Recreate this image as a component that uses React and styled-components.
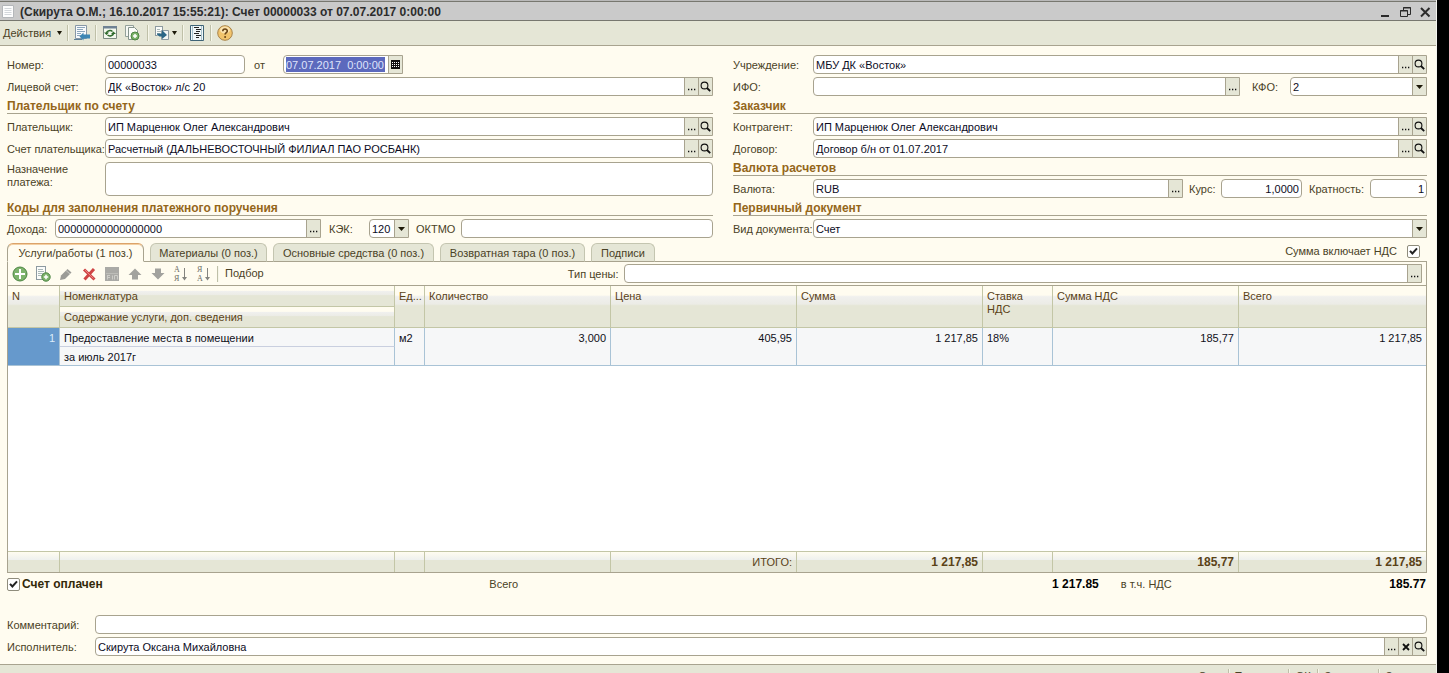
import React, { useId } from "react";
import styled, { createGlobalStyle, css } from "styled-components";

const c = {
  cream: "#fffcf0",
  bar: "#e5e6d6",
  line: "#a8a38f",
  text: "#4a4226",
  head: "#5a4216",
  gold: "#94661a",
  ink: "#0c0c1e",
  soft: "#c3c6a6",
};

const Global = createGlobalStyle`
  *, *::before, *::after { box-sizing: border-box; }
  html, body { margin: 0; height: 100%; background: #000; }
  body, button, input, select, textarea {
    font-family: "Liberation Sans", Arial, sans-serif;
    font-size: 11px;
    line-height: 13px;
  }
  button, input, select, textarea { margin: 0; }
`;

const Desktop = styled.div`
  height: 100vh;
  padding-right: 12px;
  overflow: hidden;
  background: #000;
  color: ${c.text};
`;

const Window = styled.main`
  display: flex;
  flex-direction: column;
  min-height: 100%;
  background: ${c.cream};
  border-right: 1px solid #f4f4f0;
`;

const TitleBar = styled.header`
  display: flex;
  align-items: center;
  gap: 5px;
  height: 21px;
  flex: none;
  padding: 2px 3px 0 1px;
  background: #cacaca;
  border-top: 1px solid #b9b9b9;
  border-bottom: 1px solid #77776f;
  box-shadow: inset 0 1px 0 #77776f;
`;

const Title = styled.h1`
  flex: 1;
  margin: 0;
  font-size: 12px;
  line-height: 16px;
  font-weight: bold;
  color: #2c2c2c;
  white-space: nowrap;
`;

const IconButton = styled.button`
  display: flex;
  align-items: center;
  justify-content: center;
  gap: ${(p) => (p.$w ? 2 : 0)}px;
  flex: none;
  width: ${(p) => p.$w || 16}px;
  height: 16px;
  padding: 0;
  border: 0;
  background: none;
  color: inherit;
`;

const WindowButtons = styled.div`
  display: flex;
  gap: 4px;
  color: #2b2b2b;
`;

const Toolbar = styled.nav`
  display: flex;
  align-items: center;
  height: 25px;
  flex: none;
  padding-left: 3px;
  background: ${c.bar};
  border-bottom: 1px solid ${c.line};
`;

const TextButton = styled.button`
  display: flex;
  align-items: center;
  gap: 6px;
  padding: 0;
  border: 0;
  background: none;
  color: ${c.text};
  white-space: nowrap;
`;

const Separator = styled.span`
  flex: none;
  width: 2px;
  height: 16px;
  margin: 0 ${(p) => p.$r || 5}px 0 ${(p) => p.$l || 5}px;
  border-left: 1px solid #bfc0a8;
  border-right: 1px solid #f6f6ea;
`;

const Content = styled.div`
  padding: 9px 9px 8px 7px;
`;

const FormGrid = styled.div`
  display: grid;
  grid-template-columns: minmax(0, 706fr) minmax(0, 694fr);
  column-gap: 20px;
`;

const Stack = styled.div`
  display: flex;
  flex-direction: column;
  gap: 3px;
`;

const Row = styled.div`
  display: flex;
  align-items: center;
  height: 19px;
`;

const NoteRow = styled.div`
  display: flex;
  height: 34px;
  margin: 1px 0 2px;
`;

const Heading = styled.h2`
  height: 15px;
  margin: 0;
  font-size: 12px;
  line-height: 14px;
  font-weight: bold;
  color: ${c.gold};
  border-bottom: 1px solid ${c.line};
`;

const Label = styled.label`
  flex: none;
  width: ${(p) => p.$w}px;
  margin-left: ${(p) => p.$ml || 0}px;
  white-space: ${(p) => (p.$wrap ? "normal" : "nowrap")};
  padding-top: 1px;
`;

const Box = styled.div`
  display: flex;
  align-items: stretch;
  flex: ${(p) => (p.$w ? "none" : "1")};
  width: ${(p) => (p.$w ? `${p.$w}px` : "auto")};
  min-width: 0;
  height: 19px;
  background: #fff;
  border: 1px solid ${c.line};
  border-radius: ${(p) => (p.$square ? "4px 0 0 4px" : "4px")};
  overflow: hidden;
`;

const fieldText = css`
  flex: 1;
  min-width: 0;
  width: 0;
  padding: 1px 2px 0;
  border: 0;
  outline: 0;
  background: none;
  color: ${c.ink};
`;

const Input = styled.input`
  ${fieldText}
  text-align: ${(p) => (p.$right ? "right" : "left")};
  ${(p) =>
    p.$selected &&
    css`
      margin: 1px 3px 1px 2px;
      padding: 1px 0 0;
      background: #5c69bd;
      color: #dfe3fb;
    `}
`;

const Select = styled.select`
  ${fieldText}
  appearance: none;
`;

const Area = styled.textarea`
  flex: 1;
  min-width: 0;
  height: 34px;
  padding: 2px;
  resize: none;
  color: ${c.ink};
  background: #fff;
  border: 1px solid ${c.line};
  border-radius: 4px;
`;

const boxEnd = css`
  display: flex;
  align-items: center;
  justify-content: center;
  flex: none;
  width: 14px;
  padding: 0;
  border: 0;
  border-left: 1px solid ${c.line};
  background: ${c.bar};
  color: #111;
`;
const BoxButton = styled.button`${boxEnd}`;
const BoxArrow = styled.span`${boxEnd}`;

const TabsRow = styled.div`
  display: flex;
  align-items: flex-end;
  justify-content: space-between;
  padding: 4px 7px 0 0;
`;

const Tabs = styled.div`
  display: flex;
  gap: 6px;
  margin-bottom: -1px;
`;

const Tab = styled.button`
  position: relative;
  width: ${(p) => p.$w}px;
  height: 19px;
  padding: 1px 0 0;
  border: 1px solid ${(p) => (p.$active ? c.line : "#c4c5b0")};
  border-bottom-color: ${(p) => (p.$active ? c.cream : c.line)};
  border-top-color: ${(p) => (p.$active ? "#dba36a" : "#c4c5b0")};
  box-shadow: ${(p) => (p.$active ? "inset 0 1px 0 #f3cfa2" : "none")};
  border-radius: 6px 6px 0 0;
  background: ${(p) => (p.$active ? c.cream : c.bar)};
  color: ${c.text};
  white-space: nowrap;
`;

const CheckLabel = styled.label`
  display: flex;
  align-items: center;
  gap: ${(p) => p.$gap}px;
  height: ${(p) => p.$h || 15}px;
  font-size: ${(p) => (p.$bold ? 12 : 11)}px;
  font-weight: ${(p) => (p.$bold ? "bold" : "normal")};
  color: ${(p) => (p.$bold ? "#33290a" : c.text)};
`;

const Check = styled.input`
  appearance: none;
  width: 13px;
  height: 13px;
  border: 1px solid #8f8c7c;
  border-radius: 2px;
  background: #fff;
`;

const CheckWrap = styled.span`
  display: grid;
  flex: none;
  > * {
    grid-area: 1 / 1;
  }
  > svg {
    margin: 2px;
    z-index: 1;
    pointer-events: none;
    visibility: hidden;
  }
  > input:checked + svg {
    visibility: visible;
  }
`;

const Panel = styled.section`
  border: 1px solid ${c.line};
`;

const PanelBar = styled.div`
  display: flex;
  align-items: center;
  height: 23px;
  padding: 0 4px;
`;

const ToolIcons = styled.div`
  display: flex;
  gap: 7px;
`;

const Table = styled.table`
  width: 100%;
  table-layout: fixed;
  border-collapse: separate;
  border-spacing: 0;
  border-top: 1px solid ${c.line};
  background: #fff;
`;

const Th = styled.th`
  height: 21px;
  padding: 4px 0 0 4px;
  text-align: left;
  vertical-align: top;
  font-weight: normal;
  color: ${c.head};
  border-right: 1px solid ${c.soft};
  border-bottom: 1px solid ${c.soft};
  background: linear-gradient(${c.cream} 22%, #f0f0ee 26%, #ececE6 44%, #e5e6d6 48%);
  white-space: ${(p) => (p.$wrap ? "normal" : "nowrap")};
  overflow: hidden;
  &:last-child { border-right: ${(p) => (p.$inner ? `1px solid ${c.soft}` : 0)}; }
`;

const Td = styled.td`
  height: 19px;
  padding: 4px 4px 0;
  vertical-align: top;
  text-align: ${(p) => (p.$right ? "right" : "left")};
  color: ${(p) => (p.$marked ? "#dcecfa" : "#101018")};
  background: ${(p) => (p.$marked ? "#6699cc" : "#f6f7f8")};
  border-right: 1px solid #a9c3d6;
  border-bottom: 1px solid ${(p) => (p.$light ? "#c9cfdf" : "#a9c3d6")};
  white-space: nowrap;
  &:last-child { border-right: ${(p) => (p.$inner ? "1px solid #a9c3d6" : 0)}; }
`;

const Empty = styled.td`
  height: 185px;
  padding: 0;
`;

const Tf = styled.td`
  height: 21px;
  padding: 0 4px;
  text-align: right;
  font-size: ${(p) => (p.$bold ? 12 : 11)}px;
  font-weight: ${(p) => (p.$bold ? "bold" : "normal")};
  color: ${c.head};
  border-top: 1px solid ${c.soft};
  border-right: 1px solid ${c.soft};
  background: linear-gradient(${c.cream} 0%, #eff1ee 38%, #e5e6d6 42%);
  &:last-child { border-right: 0; }
`;

const Summary = styled.div`
  display: grid;
  grid-template-columns: minmax(0, 482fr) minmax(0, 631fr) minmax(0, 306fr);
  margin: 4px 0 23px;
`;

const SummaryCell = styled.div`
  display: flex;
  align-items: center;
  justify-content: space-between;
  padding-right: ${(p) => p.$pr || 0}px;
`;

const Amount = styled.strong`
  font-size: 12px;
  color: #000;
  padding-right: 1px;
`;

const ActionBar = styled.footer`
  display: flex;
  justify-content: flex-end;
  align-items: center;
  height: 24px;
  flex: 1 0 auto;
  padding-right: 8px;
  background: ${c.bar};
  border-top: 1px solid ${c.line};
`;

const Search = () => (
  <svg width="11" height="11" viewBox="0 0 11 11" fill="none" stroke="#111">
    <circle cx="4.5" cy="4.5" r="3.4" strokeWidth="1.1" />
    <path d="M7 7l3.2 3.2" strokeWidth="1.8" />
  </svg>
);
const Dots = () => (
  <svg width="9" height="11" viewBox="0 0 9 11" fill="#111">
    <path d="M1 7.800h1.300v1.500H1zM4 7.800h1.300v1.500H4zM7 7.800h1.300v1.500H7z" />
  </svg>
);
const Cross = () => (
  <svg width="8" height="8" viewBox="0 0 8 8" stroke="#111" strokeWidth="1.8">
    <path d="M1 1l6 6M7 1L1 7" />
  </svg>
);
const Caret = ({ w = 7 }) => (
  <svg width={w} height="4" viewBox="0 0 7 4" preserveAspectRatio="none">
    <path d="M0 0h7L3.5 4z" fill="#1c1808" />
  </svg>
);
const Calendar = () => (
  <svg width="9" height="9" viewBox="0 0 9 9">
    <path d="M0 0h9v9H0z" fill="#111" />
    <path d="M1 2h1v1H1zM3 2h1v1H3zM5 2h1v1H5zM7 2h1v1H7zM1 4h1v1H1zM3 4h1v1H3zM5 4h1v1H5zM7 4h1v1H7zM1 6h1v1H1zM3 6h1v1H3zM5 6h1v1H5zM7 6h1v1H7z" fill="#fff" />
  </svg>
);
const Tick = () => (
  <svg width="9" height="9" viewBox="0 0 9 9" fill="none" stroke="#222" strokeWidth="2">
    <path d="M1 3.8l2.4 2.7L8 1.4" />
  </svg>
);

const Icon = ({ children }) => (
  <svg width="16" height="16" viewBox="0 0 16 16" fill="none">{children}</svg>
);
const Page = ({ x = 1, y = 1, w = 10, h = 13, stroke = "#8d9aa0" }) => (
  <>
    <rect x={x + 0.5} y={y + 0.5} width={w} height={h} fill="#fbfcfa" stroke={stroke} />
    <path d={`M${x + 2} ${y + 3.5}h${w - 4}M${x + 2} ${y + 5.5}h${w - 3}M${x + 2} ${y + 7.5}h${w - 4}M${x + 2} ${y + 9.5}h${w - 3}`} stroke="#a9b8b8" />
  </>
);
const Plus = ({ cx, cy, r }) => (
  <>
    <circle cx={cx} cy={cy} r={r} fill="#7db36c" stroke="#4c8542" />
    <path d={`M${cx - r + 2} ${cy}h${2 * r - 4}M${cx} ${cy - r + 2}v${2 * r - 4}`} stroke="#fff" strokeWidth={r > 5 ? 2 : 1.5} />
  </>
);
const SaveIcon = () => (
  <Icon>
    <path d="M1.5.5h11v13h-11z" fill="#f8fafc" stroke="#8797a6" />
    <path d="M3 2.500h8M3 4.500h6M3 6.500h8M3 8.500h4M3 10.500h4" stroke="#8ba5bb" />
    <path d="M5.500 11.500l4-4v2H16v4H9.500v2z" fill="#3d86b4" />
    <path d="M0 14.500h8" stroke="#5d7f96" />
  </Icon>
);
const RefreshIcon = () => (
  <Icon>
    <path d="M1.500 1.500h13v12h-13z" fill="#f4f8ef" stroke="#7c8a80" />
    <path d="M1 1h14v2.500H1z" fill="#6f8294" />
    <path d="M4.500 8a3.500 2.800 0 0 1 6-1.500M11.500 8.500a3.500 2.800 0 0 1-6 1.500" stroke="#2f6a2c" strokeWidth="1.500" />
    <path d="M2 7.500h5L4.500 10zM9 9h5l-2.500-2.500z" fill="#2f6a2c" />
  </Icon>
);
const CopyIcon = () => (
  <Icon>
    <path d="M1.500.5h8v11h-8z" fill="#f6f8f4" stroke="#93a09a" />
    <path d="M4.500 2.500h6l3 3v9h-9z" fill="#fbfcfa" stroke="#84928c" />
    <Plus cx={11} cy={11} r={4} />
  </Icon>
);
const GoIcon = () => (
  <Icon>
    <Page x={1} y={1} w={7} h={9} />
    <path d="M7.500 5.500h7v9h-7z" fill="#f3f6f4" stroke="#8d9aa0" />
    <path d="M3 5v3.500h5V5l5 5-5 4v-2.500H5.500L3 9.500z" fill="#2b6686" />
  </Icon>
);
const ListIcon = () => (
  <Icon>
    <path d="M1.500.5h13v15h-13z" fill="#eff6f8" stroke="#3e6376" />
    <path d="M3.500 1v14M12.500 1v14" stroke="#a9c3cf" />
    <path d="M5 2.500h5M7 4.500h5M7 6.500h4M5 8.500h5M7 10.500h5M7 12.500h3" stroke="#222" />
  </Icon>
);
const HelpIcon = () => (
  <Icon>
    <circle cx="8" cy="8" r="7.300" fill="#f2c46c" stroke="#a8834a" />
    <ellipse cx="8" cy="5" rx="5" ry="3.500" fill="#fbe3ae" />
    <path d="M5.800 6.200c0-3 4.600-2.800 4.500-.2 0 1.600-2.200 1.700-2.200 3.600" stroke="#694314" strokeWidth="1.600" />
    <circle cx="8.100" cy="11.900" r="1" fill="#694314" />
  </Icon>
);
const AddIcon = () => <Icon><Plus cx={8} cy={8} r={7} /></Icon>;
const AddCopyIcon = () => <Icon><Page x={1} y={0} w={9} h={13} /><Plus cx={11} cy={11} r={4.2} /></Icon>;
const EditIcon = () => (
  <Icon>
    <path d="M2 14l1-4.500L9.500 3l4 3.500L7 13z" fill="#9b9b97" />
    <path d="M8 4.500l4 3.500" stroke="#c8c8c2" />
  </Icon>
);
const DeleteIcon = () => (
  <Icon>
    <path d="M3 3.500l10.500 10M13 3L3.500 13.500" stroke="#cf4444" strokeWidth="3" />
    <path d="M4 4l8.500 8.500" stroke="#ec8080" />
  </Icon>
);
const FinishIcon = () => (
  <Icon>
    <path d="M1 1h14v14H1z" fill="#aaaaa6" />
    <path d="M2 7.500h12" stroke="#bdbdb8" />
    <path d="M3.500 9.500v4M3 9.500h3M3 11.500h3M8.500 13.500v-4M10.500 13.500v-4h3v4" stroke="#cdcdc8" />
  </Icon>
);
const UpIcon = () => <Icon><path d="M8 2.500L14.500 9H11v4.500H5V9H1.500z" fill="#a2a29e" /></Icon>;
const DownIcon = () => <Icon><path d="M8 13.500L1.500 7H5V2.500h6V7h3.500z" fill="#a2a29e" /></Icon>;
const SortIcon = ({ a, b }) => (
  <svg width="16" height="20" viewBox="0 0 16 20" fill="none">
    <text x="1" y="8" fontFamily="Liberation Serif, serif" fontSize="8" fill="#6c6c66">{a}</text>
    <text x="1" y="17" fontFamily="Liberation Serif, serif" fontSize="8" fill="#6c6c66">{b}</text>
    <path d="M11.500 4v10" stroke="#84847f" />
    <path d="M9 13h5l-2.500 3.500z" fill="#84847f" />
  </svg>
);
const FormIcon = () => (
  <svg width="14" height="15" viewBox="0 0 14 15" fill="none">
    <path d="M1.500 1.500h11v12h-11z" fill="#fdfdfd" stroke="#b4b7ba" />
    <path d="M3.500 4.500h7M3.500 6.500h7M3.500 8.500h7M3.500 10.500h7" stroke="#d3d7db" />
  </svg>
);

const ends = {
  pick: ["Выбрать", Dots],
  clear: ["Очистить", Cross],
  open: ["Открыть", Search],
  date: ["Календарь", Calendar],
};

function Field({ label, lw, ml, value = "", w, buttons = [], right, selected }) {
  const id = useId();
  return (
    <>
      <Label htmlFor={id} $w={lw} $ml={ml}>{label}</Label>
      <Box $w={w} $square={buttons.length > 0}>
        <Input id={id} defaultValue={value} $right={right} $selected={selected} />
        {buttons.map((b) => {
          const [name, Glyph] = ends[b];
          return <BoxButton key={b} type="button" aria-label={name}><Glyph /></BoxButton>;
        })}
      </Box>
    </>
  );
}

function SelectField({ label, lw, ml, value, w }) {
  const id = useId();
  return (
    <>
      <Label htmlFor={id} $w={lw} $ml={ml}>{label}</Label>
      <Box $w={w} $square>
        <Select id={id} defaultValue={value}><option>{value}</option></Select>
        <BoxArrow><Caret /></BoxArrow>
      </Box>
    </>
  );
}

const CheckBox = () => (
  <CheckWrap>
    <Check type="checkbox" defaultChecked />
    <Tick />
  </CheckWrap>
);

const tabs = [
  ["Услуги/работы (1 поз.)", 137],
  ["Материалы (0 поз.)", 117],
  ["Основные средства (0 поз.)", 161],
  ["Возвратная тара (0 поз.)", 145],
  ["Подписи", 64],
];

const tools = [
  ["Добавить", <AddIcon />],
  ["Добавить копированием", <AddCopyIcon />],
  ["Изменить", <EditIcon />],
  ["Удалить", <DeleteIcon />],
  ["Закончить редактирование", <FinishIcon />],
  ["Переместить вверх", <UpIcon />],
  ["Переместить вниз", <DownIcon />],
  ["Сортировать по возрастанию", <SortIcon a="А" b="Я" />],
  ["Сортировать по убыванию", <SortIcon a="Я" b="А" />],
];

const columns = [52, null, 30, 186, 186, 186, 70, 186, 187];

export default function App() {
  const noteId = useId();
  return (
    <Desktop>
      <Global />
      <Window>
        <TitleBar>
          <FormIcon />
          <Title>(Скирута О.М.; 16.10.2017 15:55:21): Счет 00000033 от 07.07.2017 0:00:00</Title>
          <WindowButtons>
            <IconButton aria-label="Свернуть">
              <svg width="12" height="12"><path d="M2 10h8" stroke="currentColor" strokeWidth="2" /></svg>
            </IconButton>
            <IconButton aria-label="Восстановить">
              <svg width="12" height="12" fill="none" stroke="currentColor">
                <path d="M1.500 4.500h7v6h-7zM4.500 4V1.500h7V8.500H9M4 2h8M1 5h8" />
              </svg>
            </IconButton>
            <IconButton aria-label="Закрыть">
              <svg width="12" height="12"><path d="M2 2l8.500 8.500M10.500 2L2 10.500" stroke="currentColor" strokeWidth="2" /></svg>
            </IconButton>
          </WindowButtons>
        </TitleBar>

        <Toolbar>
          <TextButton>Действия <Caret w={5} /></TextButton>
          <Separator />
          <IconButton aria-label="Записать"><SaveIcon /></IconButton>
          <Separator />
          <IconButton aria-label="Перечитать"><RefreshIcon /></IconButton>
          <IconButton aria-label="Скопировать" $w={28}><CopyIcon /></IconButton>
          <Separator $l={1} $r={4} />
          <IconButton aria-label="Перейти" $w={24}><GoIcon /><Caret w={5} /></IconButton>
          <Separator />
          <IconButton aria-label="Список"><ListIcon /></IconButton>
          <Separator />
          <IconButton aria-label="Справка"><HelpIcon /></IconButton>
        </Toolbar>

        <Content>
          <FormGrid>
            <Stack>
              <Row>
                <Field label="Номер:" lw={98} value="00000033" w={140} />
                <Field label="от" lw={29} ml={9} value="07.07.2017  0:00:00" w={120} buttons={["date"]} selected />
              </Row>
              <Row><Field label="Лицевой счет:" lw={98} value="ДК «Восток» л/с 20" buttons={["pick", "open"]} /></Row>
              <Heading>Плательщик по счету</Heading>
              <Row><Field label="Плательщик:" lw={98} value="ИП Марценюк Олег Александрович" buttons={["pick", "open"]} /></Row>
              <Row><Field label="Счет плательщика:" lw={98} value="Расчетный (ДАЛЬНЕВОСТОЧНЫЙ ФИЛИАЛ ПАО РОСБАНК)" buttons={["pick", "open"]} /></Row>
              <NoteRow>
                <Label htmlFor={noteId} $w={98} $wrap>Назначение<br />платежа:</Label>
                <Area id={noteId} />
              </NoteRow>
              <Heading>Коды для заполнения платежного поручения</Heading>
              <Row>
                <Field label="Дохода:" lw={48} value="00000000000000000" w={266} buttons={["pick"]} />
                <SelectField label="КЭК:" lw={40} ml={8} value="120" w={40} />
                <Field label="ОКТМО" lw={45} ml={7} />
              </Row>
            </Stack>
            <Stack>
              <Row><Field label="Учреждение:" lw={80} value="МБУ ДК «Восток»" buttons={["pick", "open"]} /></Row>
              <Row>
                <Field label="ИФО:" lw={80} buttons={["pick"]} />
                <SelectField label="КФО:" lw={38} ml={12} value="2" w={137} />
              </Row>
              <Heading>Заказчик</Heading>
              <Row><Field label="Контрагент:" lw={80} value="ИП Марценюк Олег Александрович" buttons={["pick", "open"]} /></Row>
              <Row><Field label="Договор:" lw={80} value="Договор б/н от 01.07.2017" buttons={["pick", "open"]} /></Row>
              <Heading>Валюта расчетов</Heading>
              <Row>
                <Field label="Валюта:" lw={80} value="RUB" buttons={["pick"]} />
                <Field label="Курс:" lw={32} ml={6} value="1,0000" w={81} right />
                <Field label="Кратность:" lw={61} ml={7} value="1" w={57} right />
              </Row>
              <Heading>Первичный документ</Heading>
              <Row><SelectField label="Вид документа:" lw={80} value="Счет" /></Row>
            </Stack>
          </FormGrid>

          <TabsRow>
            <Tabs role="tablist">
              {tabs.map(([name, w], i) => (
                <Tab key={name} role="tab" aria-selected={i === 0} $active={i === 0} $w={w}>{name}</Tab>
              ))}
            </Tabs>
            <CheckLabel $gap={10} $h={19}>Сумма включает НДС <CheckBox /></CheckLabel>
          </TabsRow>

          <Panel>
            <PanelBar>
              <ToolIcons>
                {tools.map(([name, icon]) => <IconButton key={name} aria-label={name}>{icon}</IconButton>)}
              </ToolIcons>
              <Separator $l={5} $r={6} />
              <TextButton>Подбор</TextButton>
              <Field label="Тип цены:" lw={56} ml={304} buttons={["pick"]} />
            </PanelBar>
            <Table>
              <colgroup>
                {columns.map((w, i) => <col key={i} width={w || undefined} />)}
              </colgroup>
              <thead>
                <tr>
                  <Th rowSpan={2}>N</Th>
                  <Th>Номенклатура</Th>
                  <Th rowSpan={2}>Ед...</Th>
                  <Th rowSpan={2}>Количество</Th>
                  <Th rowSpan={2}>Цена</Th>
                  <Th rowSpan={2}>Сумма</Th>
                  <Th rowSpan={2} $wrap>Ставка<br />НДС</Th>
                  <Th rowSpan={2}>Сумма НДС</Th>
                  <Th rowSpan={2}>Всего</Th>
                </tr>
                <tr><Th $inner>Содержание услуги, доп. сведения</Th></tr>
              </thead>
              <tbody>
                <tr>
                  <Td rowSpan={2} $right $marked>1</Td>
                  <Td $light>Предоставление места в помещении</Td>
                  <Td rowSpan={2}>м2</Td>
                  <Td rowSpan={2} $right>3,000</Td>
                  <Td rowSpan={2} $right>405,95</Td>
                  <Td rowSpan={2} $right>1 217,85</Td>
                  <Td rowSpan={2}>18%</Td>
                  <Td rowSpan={2} $right>185,77</Td>
                  <Td rowSpan={2} $right>1 217,85</Td>
                </tr>
                <tr><Td $inner>за июль 2017г</Td></tr>
                <tr><Empty colSpan={9} /></tr>
              </tbody>
              <tfoot>
                <tr>
                  <Tf /><Tf /><Tf /><Tf />
                  <Tf>ИТОГО:</Tf>
                  <Tf $bold>1 217,85</Tf>
                  <Tf />
                  <Tf $bold>185,77</Tf>
                  <Tf $bold>1 217,85</Tf>
                </tr>
              </tfoot>
            </Table>
          </Panel>

          <Summary>
            <SummaryCell><CheckLabel $gap={2} $bold><CheckBox /> Счет оплачен</CheckLabel></SummaryCell>
            <SummaryCell $pr={21}><span>Всего</span><Amount>1 217.85</Amount></SummaryCell>
            <SummaryCell><span>в т.ч. НДС</span><Amount>185.77</Amount></SummaryCell>
          </Summary>

          <Stack>
            <Row><Field label="Комментарий:" lw={88} /></Row>
            <Row><Field label="Исполнитель:" lw={88} value="Скирута Оксана Михайловна" buttons={["pick", "clear", "open"]} /></Row>
          </Stack>
        </Content>

        <ActionBar>
          <TextButton>Счет</TextButton><Separator />
          <TextButton>Печать <Caret w={5} /></TextButton><Separator $l={6} $r={6} />
          <TextButton>ОК</TextButton><Separator $l={6} $r={6} />
          <TextButton>Записать</TextButton><Separator $l={6} $r={6} />
          <TextButton>Закрыть</TextButton>
        </ActionBar>
      </Window>
    </Desktop>
  );
}
